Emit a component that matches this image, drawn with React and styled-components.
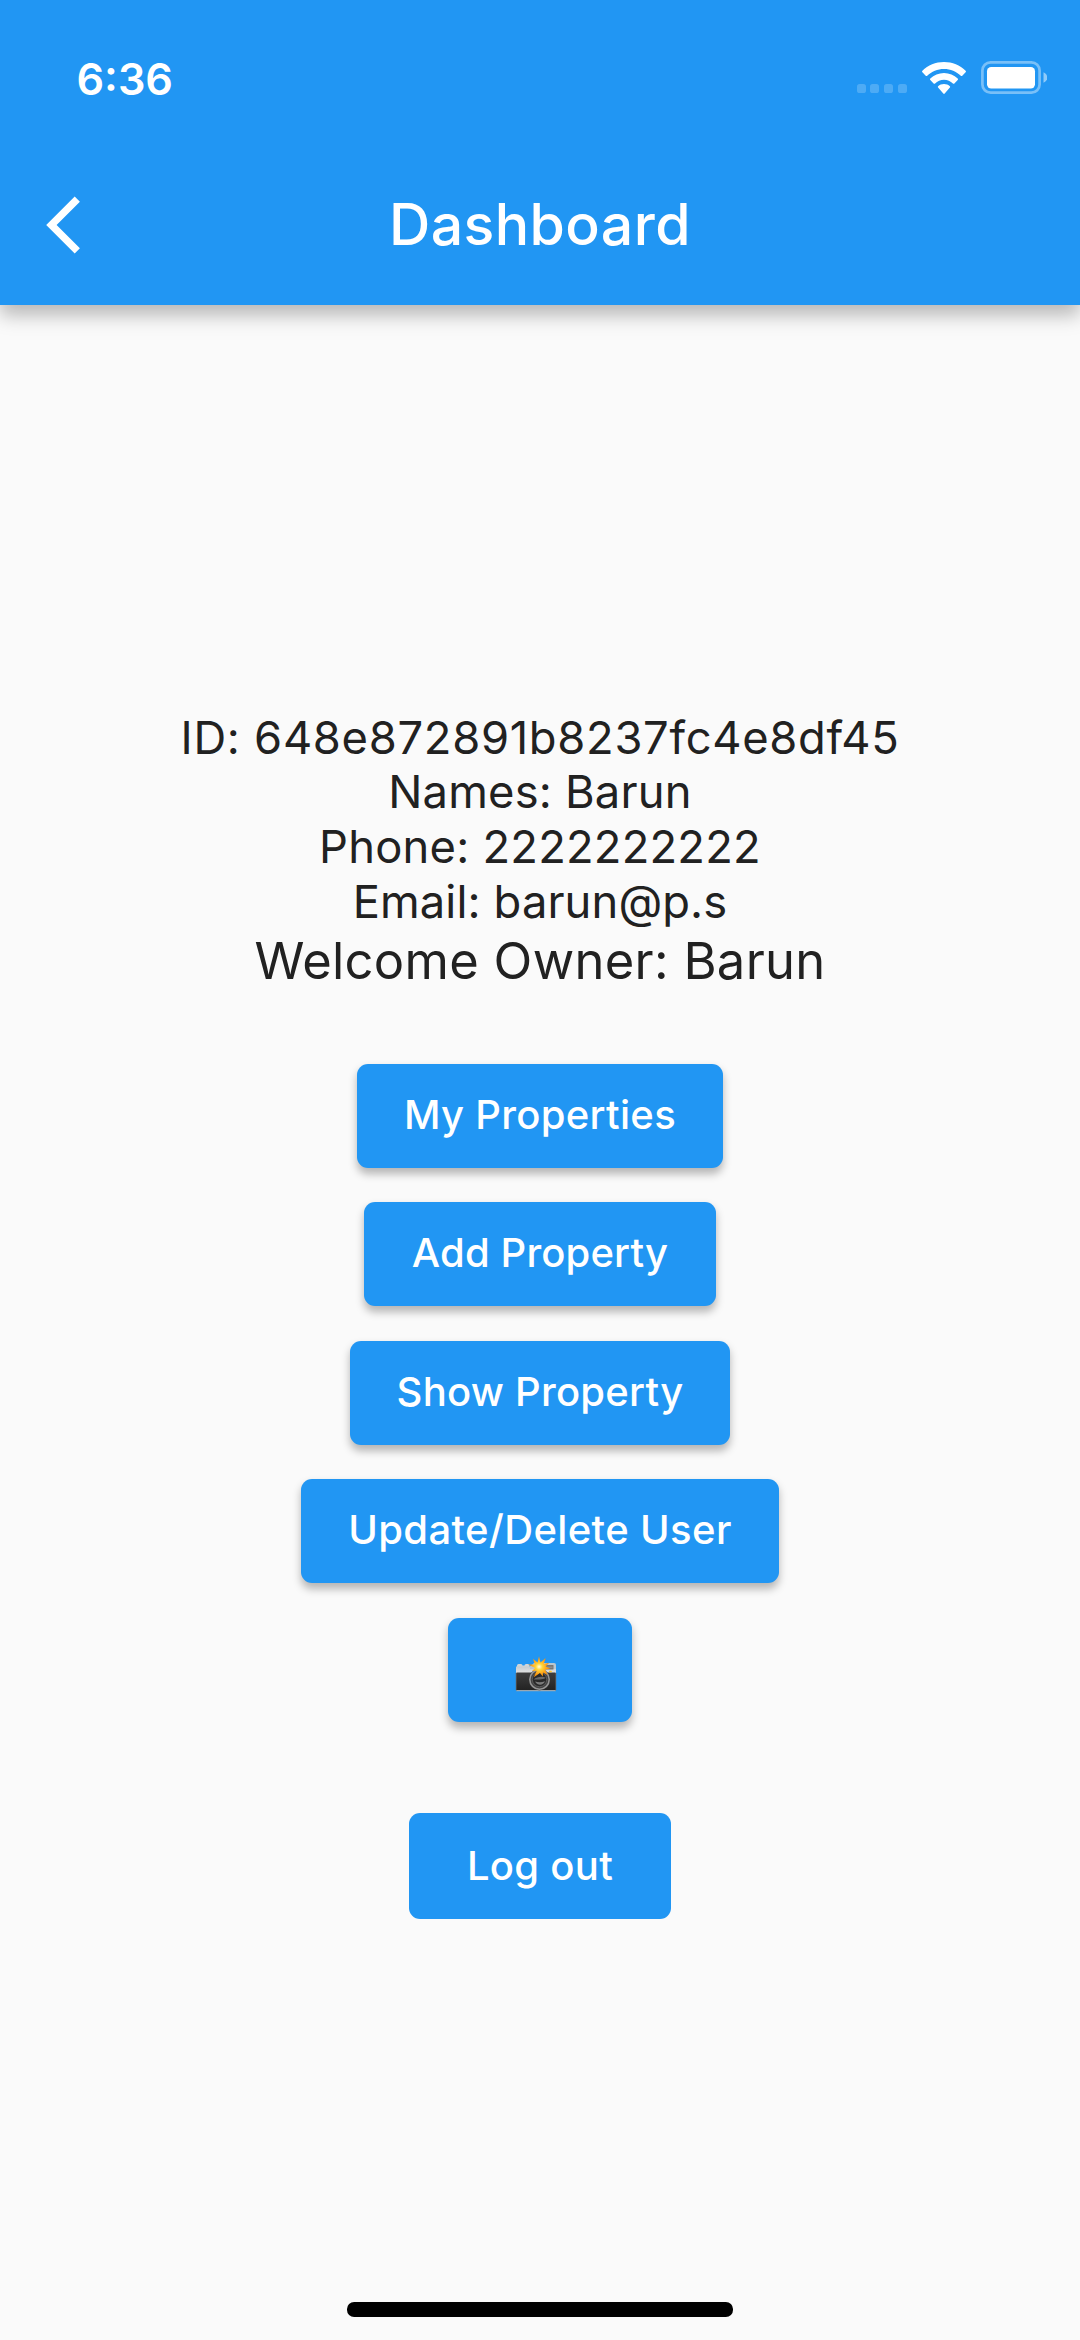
import React from "react";
import styled, { createGlobalStyle } from "styled-components";

const GlobalStyle = createGlobalStyle`
  *, *::before, *::after { box-sizing: border-box; }
  body { margin: 0; background: #fafafa; }
`;

const Screen = styled.div`
  display: flex;
  flex-direction: column;
  width: 1080px;
  height: 2340px;
  overflow: hidden;
  background: #fafafa;
  color: #212121;
  font-family: Inter, "Liberation Sans", sans-serif;
`;

const Header = styled.header`
  flex: none;
  height: 305.4px;
  background: #2196f3;
  color: #fff;
  box-shadow: 0 10px 18px rgba(0, 0, 0, 0.27);
`;

const StatusBar = styled.div`
  display: flex;
  align-items: center;
  justify-content: space-between;
  height: 144px;
  padding: 14px 33px 0 76.5px;
`;

const Clock = styled.time`
  font-size: 43.2px;
  font-weight: 600;
  line-height: 50px;
  letter-spacing: 0;
`;

const StatusIcons = styled.div`
  display: flex;
  align-items: center;
  margin-bottom: 3px;
`;

const SignalDots = styled.div`
  display: flex;
  gap: 4.6px;
  margin: 22px 15.5px 0 0;
`;

const Dot = styled.span`
  width: 9px;
  height: 9px;
  border-radius: 2.6px;
  background: rgba(255, 255, 255, 0.2);
`;

const WifiIcon = styled.svg`
  display: block;
  width: 44px;
  height: 32px;
  margin-right: 15px;
`;

const BatteryIcon = styled.svg`
  display: block;
  width: 66px;
  height: 33px;
`;

const AppBar = styled.div`
  display: grid;
  grid-template-columns: 160px 1fr 160px;
  align-items: center;
  height: 161px;
`;

const BackButton = styled.button`
  display: flex;
  align-items: center;
  height: 130px;
  padding: 0 0 0 46px;
  border: 0;
  background: none;
  color: inherit;
`;

const Title = styled.h1`
  margin: 0;
  font-size: 57.2px;
  font-weight: 500;
  line-height: 68px;
  letter-spacing: 0.4px;
  text-align: center;
`;

const Main = styled.main`
  flex: 1;
  display: flex;
  flex-direction: column;
  align-items: center;
  padding-top: 405.2px;
`;

const Detail = styled.p`
  margin: 0;
  font-size: 45.3px;
  line-height: 54.8px;
  letter-spacing: ${(p) => p.$spacing}px;
  white-space: nowrap;
`;

const Welcome = styled.p`
  margin: 0;
  font-size: 50.7px;
  line-height: 61.4px;
  letter-spacing: 0.3px;
  white-space: nowrap;
`;

const Actions = styled.div`
  display: flex;
  flex-direction: column;
  align-items: center;
  gap: 34.6px;
  margin-top: 72.8px;
`;

const Button = styled.button`
  display: flex;
  align-items: center;
  justify-content: center;
  width: ${(p) => p.$width}px;
  height: 103.85px;
  padding: 0 0 2px;
  border: 0;
  border-radius: 11px;
  background: #2196f3;
  color: #fff;
  box-shadow: 0 5.5px 8px rgba(0, 0, 0, 0.28);
  font-family: inherit;
  font-size: 40px;
  font-weight: 500;
  line-height: 48px;
  letter-spacing: ${(p) => p.$spacing || 0}px;
  white-space: nowrap;
`;

const LogoutButton = styled(Button)`
  height: 106.3px;
  margin-top: 91px;
  padding: 0;
  box-shadow: none;
`;

const CameraIcon = styled.svg`
  display: block;
  width: 42px;
  height: 38px;
  margin: 12px 8px 0 0;
`;

const HomeArea = styled.footer`
  display: flex;
  justify-content: center;
  height: 37.6px;
`;

const HomeIndicator = styled.div`
  width: 386.4px;
  height: 14.2px;
  border-radius: 7.1px;
  background: #000;
`;

const DETAILS = [
  { text: "ID: 648e872891b8237fc4e8df45", spacing: 0.72 },
  { text: "Names: Barun", spacing: 0.2 },
  { text: "Phone: 2222222222", spacing: 0.22 },
  { text: "Email: barun@p.s", spacing: 0.12 },
];

const ACTIONS = [
  { text: "My Properties", width: 366, spacing: 0.3 },
  { text: "Add Property", width: 351.4, spacing: 0.15 },
  { text: "Show Property", width: 380.8, spacing: 0.25 },
  { text: "Update/Delete User", width: 478.4, spacing: 0.38 },
];

function Wifi() {
  return (
    <WifiIcon viewBox="0 0 44 32" fill="#fff">
      <path d="M22 0C13.6 0 6 3.3.4 8.8c-.5.5-.5 1 0 1.500l3.300 3.400c.5.5 1 .5 1.500 0C9.600 9.400 15.500 6.900 22 6.900s12.400 2.500 16.800 6.800c.5.5 1 .5 1.500 0l3.300-3.400c.5-.5.5-1 0-1.500C38 3.300 30.400 0 22 0z" />
      <path d="M22 10.900c-5.300 0-10.100 2.100-13.700 5.600-.5.5-.5 1 0 1.500l3.300 3.400c.5.5 1 .5 1.500 0 2.300-2.300 5.500-3.700 8.900-3.700s6.600 1.400 8.900 3.700c.5.5 1 .5 1.500 0l3.300-3.400c.5-.5.5-1 0-1.500-3.600-3.500-8.400-5.600-13.700-5.600z" />
      <path d="M22 22c-2.300 0-4.400.9-5.900 2.300-.4.4-.4.9 0 1.300l5.200 5.900c.4.500 1 .5 1.400 0l5.200-5.900c.4-.4.4-.9 0-1.300C26.400 22.900 24.300 22 22 22z" />
    </WifiIcon>
  );
}

function Battery() {
  return (
    <BatteryIcon viewBox="0 0 66 33">
      <rect x="1.400" y="1.400" width="57.200" height="30.200" rx="8.200" fill="none" stroke="#fff" strokeOpacity=".4" strokeWidth="2.700" />
      <rect x="6" y="6" width="48" height="21.500" rx="4.200" fill="#fff" />
      <path d="M62.500 11.300c2.400 1 3.800 3 3.800 5.200s-1.400 4.200-3.800 5.200z" fill="#fff" fillOpacity=".5" />
    </BatteryIcon>
  );
}

function BackChevron() {
  return (
    <svg width="34" height="58" viewBox="0 0 34 58" fill="#fff">
      <path d="M28.700.5 33.900 5.700 10.600 29l23.300 23.300-5.200 5.200L.2 29z" />
    </svg>
  );
}

function CameraFlash() {
  return (
    <CameraIcon viewBox="0 0 42 38">
      <defs>
        <linearGradient id="body" x1="0" y1="0" x2="0" y2="1">
          <stop offset="0" stopColor="#3d3d3d" />
          <stop offset="1" stopColor="#222" />
        </linearGradient>
        <linearGradient id="plate" x1="0" y1="0" x2="0" y2="1">
          <stop offset="0" stopColor="#c4cbd0" />
          <stop offset="1" stopColor="#e4e4e4" />
        </linearGradient>
        <radialGradient id="flash">
          <stop offset="0" stopColor="#fffde0" />
          <stop offset=".3" stopColor="#ffd63a" />
          <stop offset=".65" stopColor="#ffa61a" />
          <stop offset="1" stopColor="#f58a07" />
        </radialGradient>
      </defs>
      <path d="M2 11V9.500q0-1.500 1.500-1.500h2.500q1.500 0 1.500 1.500h2q0-1.500 1.500-1.500h2q1.500 0 1.500 1.500V12H2z" fill="#cfd5d9" />
      <rect x="1" y="10.500" width="40" height="7" fill="url(#plate)" />
      <path d="M15 10.500 19 7h20q2 0 2 2v4H15z" fill="#b9c6cf" />
      <rect x="30" y="9" width="8.500" height="4.500" rx=".6" fill="#777" />
      <path d="M31 11.200h6.500" stroke="#a2a2a2" strokeWidth=".8" />
      <rect x="1" y="16.500" width="40" height="18.200" rx="1" fill="url(#body)" />
      <path d="M1.300 34.700h39.400" stroke="#9ba7af" strokeWidth="1.200" />
      <path d="M1.200 17v17M40.800 17v17" stroke="#686868" strokeWidth=".7" />
      <rect x="34" y="14.800" width="2.800" height="1.500" rx=".6" fill="#ffc928" />
      <circle cx="24.500" cy="23.500" r="10.700" fill="#3a3a3a" />
      <circle cx="24.500" cy="23.500" r="9.700" fill="#444" stroke="#959595" strokeWidth="1.500" />
      <circle cx="24.500" cy="23.500" r="7.200" fill="#292929" stroke="#626262" strokeWidth=".8" />
      <path d="M18.600 23.500c3-2.400 8-3.400 12-2-1 2.300-5.500 1.800-12 2z" fill="#696969" />
      <path d="M20 25.500c3.500 1 7 .8 10-.3-1.600 4.300-7.200 5-10 .3z" fill="#7b7b7b" />
      <path
        d="m24 .3 1.500 6.100L30.700 2l-2 6 5.500-1.200-3.600 3.800 4.500 2-5 1.200 2.600 5.100-4.700-2.500-.2 4.200-2.800-3.700-6.200 4.300 2.900-6.400-4.600.3 3-3.200-7-3.400 6.700.1-1.800-5.800 4.500 3.700z"
        fill="url(#flash)"
      />
    </CameraIcon>
  );
}

export default function App() {
  return (
    <>
      <GlobalStyle />
      <Screen>
        <Header>
          <StatusBar>
            <Clock>6:36</Clock>
            <StatusIcons>
              <SignalDots>
                <Dot />
                <Dot />
                <Dot />
                <Dot />
              </SignalDots>
              <Wifi />
              <Battery />
            </StatusIcons>
          </StatusBar>
          <AppBar>
            <BackButton aria-label="Back">
              <BackChevron />
            </BackButton>
            <Title>Dashboard</Title>
          </AppBar>
        </Header>
        <Main>
          {DETAILS.map((d) => (
            <Detail key={d.text} $spacing={d.spacing}>
              {d.text}
            </Detail>
          ))}
          <Welcome>Welcome Owner: Barun</Welcome>
          <Actions>
            {ACTIONS.map((a) => (
              <Button key={a.text} $width={a.width} $spacing={a.spacing}>
                {a.text}
              </Button>
            ))}
            <Button $width={184.8} aria-label="Camera">
              <CameraFlash />
            </Button>
          </Actions>
          <LogoutButton $width={262} $spacing={0.3}>
            Log out
          </LogoutButton>
        </Main>
        <HomeArea>
          <HomeIndicator />
        </HomeArea>
      </Screen>
    </>
  );
}
